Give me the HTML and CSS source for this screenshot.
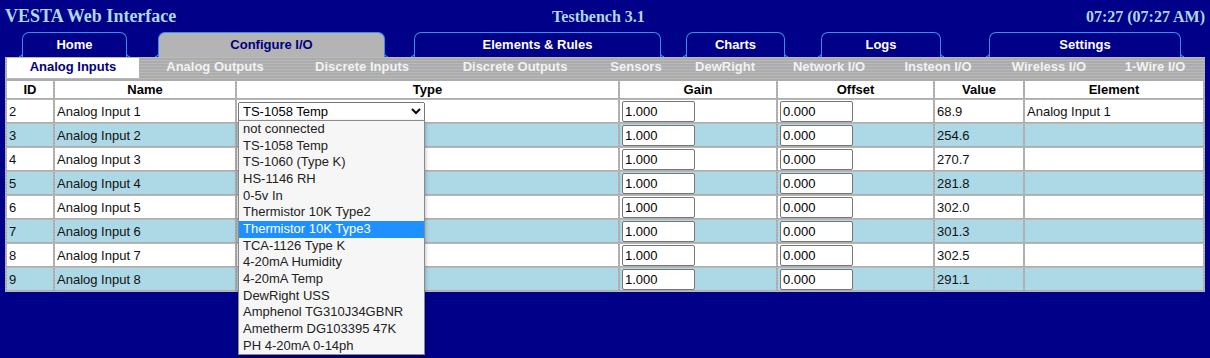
FILE: index.html
```html
<!DOCTYPE html>
<html lang="en">
<head>
    <meta charset="UTF-8">
    <title>VESTA Web Interface</title>
    <link rel="stylesheet" href="styles.css">
</head>
<body>
    <div class="topbar">
        <div class="title">VESTA Web Interface</div>
        <div class="site">Testbench 3.1</div>
        <div class="clock">07:27 (07:27 AM)</div>
    </div>

    <nav class="tabs">
        <a class="tab tab-home" href="#">Home</a>
        <a class="tab tab-config active" href="#">Configure I/O</a>
        <a class="tab tab-rules" href="#">Elements &amp; Rules</a>
        <a class="tab tab-charts" href="#">Charts</a>
        <a class="tab tab-logs" href="#">Logs</a>
        <a class="tab tab-settings" href="#">Settings</a>
    </nav>

    <div class="panel">
        <table class="subnav">
            <colgroup>
                <col class="s-ai"><col class="s-ao"><col class="s-di"><col class="s-do"><col class="s-sen">
                <col class="s-dew"><col class="s-net"><col class="s-ins"><col class="s-wir"><col class="s-ow">
            </colgroup>
            <tr>
                <td class="active">Analog Inputs</td>
                <td>Analog Outputs</td>
                <td>Discrete Inputs</td>
                <td>Discrete Outputs</td>
                <td>Sensors</td>
                <td>DewRight</td>
                <td>Network I/O</td>
                <td>Insteon I/O</td>
                <td>Wireless I/O</td>
                <td>1-Wire I/O</td>
            </tr>
        </table>

        <table class="io-table">
            <colgroup>
                <col class="c-id"><col class="c-name"><col class="c-type"><col class="c-gain">
                <col class="c-offset"><col class="c-value"><col class="c-element">
            </colgroup>
            <tr class="head">
                <th>ID</th><th>Name</th><th>Type</th><th>Gain</th><th>Offset</th><th>Value</th><th>Element</th>
            </tr>
            <tr>
                <td>2</td>
                <td>Analog Input 1</td>
                <td>
                    <select class="type-select">
                        <option>TS-1058 Temp</option>
                    </select>
                </td>
                <td><input type="text" value="1.000"></td>
                <td><input type="text" value="0.000"></td>
                <td>68.9</td>
                <td>Analog Input 1</td>
            </tr>
            <tr class="alt">
                <td>3</td><td>Analog Input 2</td><td></td>
                <td><input type="text" value="1.000"></td><td><input type="text" value="0.000"></td>
                <td>254.6</td><td></td>
            </tr>
            <tr>
                <td>4</td><td>Analog Input 3</td><td></td>
                <td><input type="text" value="1.000"></td><td><input type="text" value="0.000"></td>
                <td>270.7</td><td></td>
            </tr>
            <tr class="alt">
                <td>5</td><td>Analog Input 4</td><td></td>
                <td><input type="text" value="1.000"></td><td><input type="text" value="0.000"></td>
                <td>281.8</td><td></td>
            </tr>
            <tr>
                <td>6</td><td>Analog Input 5</td><td></td>
                <td><input type="text" value="1.000"></td><td><input type="text" value="0.000"></td>
                <td>302.0</td><td></td>
            </tr>
            <tr class="alt">
                <td>7</td><td>Analog Input 6</td><td></td>
                <td><input type="text" value="1.000"></td><td><input type="text" value="0.000"></td>
                <td>301.3</td><td></td>
            </tr>
            <tr>
                <td>8</td><td>Analog Input 7</td><td></td>
                <td><input type="text" value="1.000"></td><td><input type="text" value="0.000"></td>
                <td>302.5</td><td></td>
            </tr>
            <tr class="alt">
                <td>9</td><td>Analog Input 8</td><td></td>
                <td><input type="text" value="1.000"></td><td><input type="text" value="0.000"></td>
                <td>291.1</td><td></td>
            </tr>
        </table>

        <!-- open list of the Type select in the first row -->
        <div class="dropdown">
            <div>not connected</div>
            <div>TS-1058 Temp</div>
            <div>TS-1060 (Type K)</div>
            <div>HS-1146 RH</div>
            <div>0-5v In</div>
            <div>Thermistor 10K Type2</div>
            <div class="hover">Thermistor 10K Type3</div>
            <div>TCA-1126 Type K</div>
            <div>4-20mA Humidity</div>
            <div>4-20mA Temp</div>
            <div>DewRight USS</div>
            <div>Amphenol TG310J34GBNR</div>
            <div>Ametherm DG103395 47K</div>
            <div>PH 4-20mA 0-14ph</div>
        </div>
    </div>
</body>
</html>
```

FILE: styles.css
```css
html {
    background-color: #000088;
}

body {
    margin: 0;
    min-height: 100vh;
    background-color: #000088;
    font-family: "Liberation Sans", Arial, sans-serif;
    font-size: 13px;
}

.topbar {
    display: grid;
    grid-template-columns: 1fr auto 1fr;
    align-items: baseline;
    height: 32px;
    padding: 0 5px;
    font-family: "Liberation Serif", "Times New Roman", serif;
    font-weight: bold;
    color: #add8e6;
}

.title {
    font-size: 18px;
    padding-top: 6px;
}

.site {
    font-size: 16px;
    margin-right: 13px;
}

.clock {
    font-size: 16px;
    text-align: right;
}

/* main tabs */
.tabs {
    display: flex;
    height: 25px;
}

.tab {
    position: relative;
    box-sizing: border-box;
    height: 25px;
    padding-top: 4px;
    border: 1px solid #3a8ee6;
    border-bottom: none;
    border-radius: 7px 7px 0 0;
    color: #fff;
    font-weight: bold;
    text-align: center;
    text-decoration: none;
    line-height: 16px;
}

.tab::before,
.tab::after {
    content: "";
    position: absolute;
    bottom: 0;
    width: 3px;
    height: 4px;
    border-bottom: 1px solid #3a8ee6;
}

.tab::before {
    left: -4px;
    border-right: 1px solid #3a8ee6;
    border-bottom-right-radius: 4px;
}

.tab::after {
    right: -4px;
    border-left: 1px solid #3a8ee6;
    border-bottom-left-radius: 4px;
}

.tab.active {
    background-color: #b4b4b4;
    color: #000080;
}

.tab-home { margin-left: 22px; width: 105px; }
.tab-config { margin-left: 31px; width: 227px; }
.tab-rules { margin-left: 29px; width: 247px; }
.tab-charts { margin-left: 25px; width: 99px; }
.tab-logs { margin-left: 36px; width: 120px; }
.tab-settings { margin-left: 48px; width: 192px; }

/* gray panel */
.panel {
    position: relative;
    margin: 0 5px;
    background-color: #b3b3b3;
    background-image: repeating-linear-gradient(0deg, rgba(255,255,255,0.08) 0, rgba(255,255,255,0.08) 1px, rgba(0,0,0,0.04) 1px, rgba(0,0,0,0.04) 3px);
}

.subnav {
    width: 100%;
    table-layout: fixed;
    border-spacing: 2px 1px;
}

.s-ai { width: 132px; }
.s-ao { width: 148px; }
.s-di { width: 142px; }
.s-do { width: 160px; }
.s-sen { width: 78px; }
.s-dew { width: 96px; }
.s-net { width: 108px; }
.s-ins { width: 106px; }
.s-wir { width: 112px; }
.s-ow { width: 96px; }

.subnav td {
    box-sizing: border-box;
    height: 20px;
    padding: 1px 0 0;
    vertical-align: top;
    line-height: 16px;
    text-align: center;
    font-weight: bold;
    color: #f2f2f2;
    white-space: nowrap;
}

.subnav td.active {
    background-color: #fff;
    color: #000080;
}

.io-table {
    width: 100%;
    table-layout: fixed;
    border-spacing: 2px;
}

.c-id { width: 46px; }
.c-name { width: 180px; }
.c-type { width: 381px; }
.c-gain { width: 156px; }
.c-offset { width: 155px; }
.c-value { width: 88px; }
.c-element { width: 178px; }

.io-table th {
    height: 17px;
    padding: 0;
    background-color: #fff;
    color: #000;
    font-size: 13px;
    line-height: 15px;
}

.io-table td {
    height: 22px;
    padding: 0 2px;
    background-color: #fff;
    color: #111;
    white-space: nowrap;
}

.io-table tr.alt td {
    background-color: #add8e6;
}

.io-table input {
    box-sizing: border-box;
    width: 73px;
    height: 21px;
    margin: 0;
    padding: 1px 2px;
    border: 1px solid #767676;
    border-radius: 2px;
    background: #fff;
    font-family: inherit;
    font-size: 13px;
    vertical-align: middle;
}

.type-select {
    box-sizing: border-box;
    width: 187px;
    height: 19px;
    margin: 0 0 0 -1px;
    font-family: inherit;
    font-size: 13px;
    vertical-align: middle;
}

.dropdown {
    position: absolute;
    left: 233px;
    top: 63px;
    z-index: 5;
    width: 185px;
    background-color: #f6f6f6;
    border: 1px solid #8a8a8a;
    box-shadow: 0 2px 4px rgba(0,0,0,0.35);
    color: #222;
}

.dropdown div {
    height: 16.67px;
    line-height: 16.67px;
    padding-left: 4px;
}

.dropdown div.hover {
    background-color: #1e90ff;
    color: #fff;
}
```
